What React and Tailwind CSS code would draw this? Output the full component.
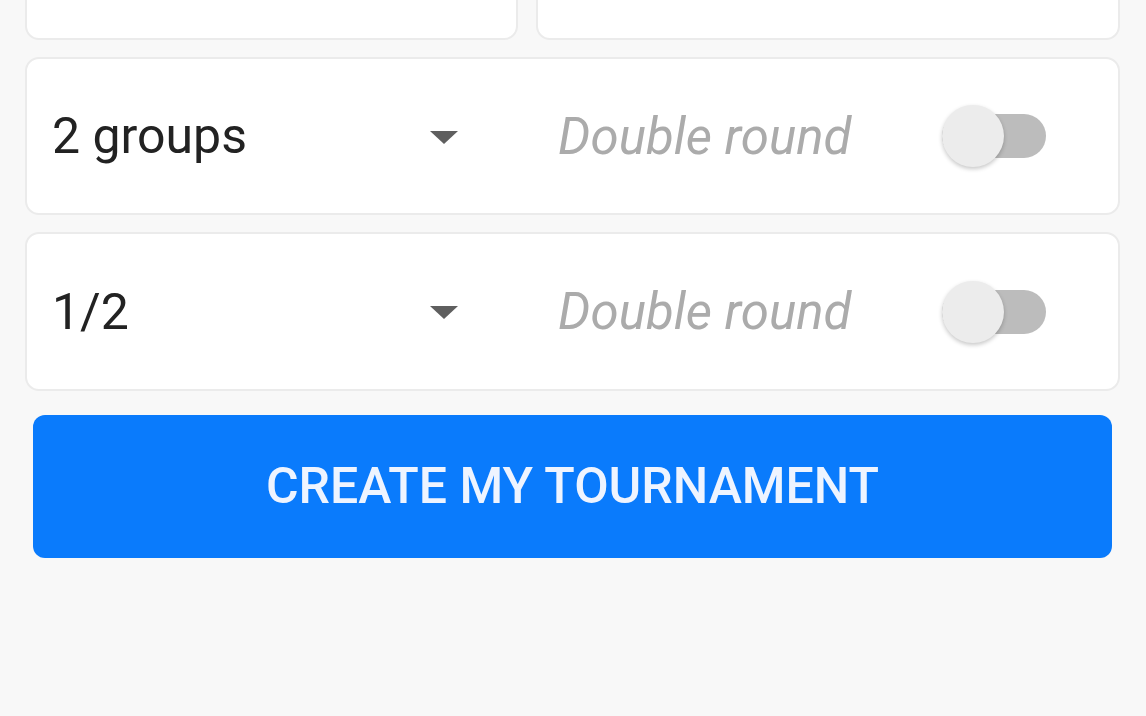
import React from "react";

function Toggle() {
  return (
    <div className="relative w-[104px] h-[66px] flex items-center">
      <div className="w-[104px] h-[44px] rounded-full bg-[#bcbcbc]" />
      <div className="absolute left-0 top-[2px] w-[62px] h-[62px] rounded-full bg-[#ececec] shadow-[0_2px_4px_rgba(0,0,0,0.22)]" />
    </div>
  );
}

function Row({ label, h }) {
  return (
    <div
      className={`flex items-center bg-white border-2 border-[#ebebeb] rounded-[14px] ${h}`}
    >
      <div className="flex items-center justify-between w-[418px] ml-[25px]">
        <span className="text-[50px] leading-none text-[#222222]">{label}</span>
        <svg width="30" height="15" viewBox="0 0 30 15" className="mr-[11px] mt-[2px]">
          <path d="M1 1 L29 1 L15 14 Z" fill="#5f5f5f" />
        </svg>
      </div>
      <span className="ml-[88px] flex-1 text-[51px] leading-none italic text-[#ababab]">
        Double round
      </span>
      <div className="mr-[72px]">
        <Toggle />
      </div>
    </div>
  );
}

export default function App() {
  return (
    <div
      className="w-[1146px] h-[716px] overflow-hidden bg-[#f8f8f8]"
      style={{ fontFamily: "Roboto, 'Liberation Sans', sans-serif" }}
    >
      <div className="px-[25px] pr-[26px]">
        <div className="flex gap-[18px] -mt-[80px]">
          <div className="w-[493px] h-[120px] bg-white border-2 border-[#ebebeb] rounded-[14px]" />
          <div className="flex-1 h-[120px] bg-white border-2 border-[#ebebeb] rounded-[14px]" />
        </div>
        <div className="mt-[17px] flex flex-col gap-[17px]">
          <Row label="2 groups" h="h-[158px]" />
          <Row label="1/2" h="h-[159px]" />
        </div>
        <div className="mt-[24px] px-[8px]">
          <button className="w-full h-[143px] rounded-[12px] bg-[#0a7bfc] text-[#eef4ff] text-[50px] font-medium flex items-center justify-center">
            CREATE MY TOURNAMENT
          </button>
        </div>
      </div>
    </div>
  );
}
